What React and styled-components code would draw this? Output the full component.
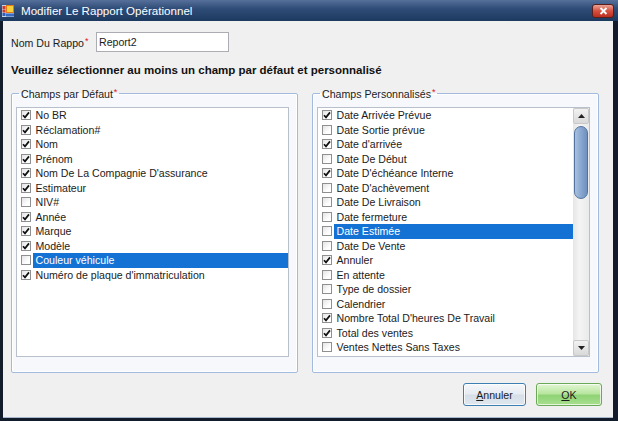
import styled, { createGlobalStyle } from "styled-components";

const GlobalStyle = createGlobalStyle`
  html, body {
    margin: 0;
    padding: 0;
    background: #fff;
  }
  body {
    font-family: "Liberation Sans", Arial, sans-serif;
  }
`;

const Window = styled.div`
  width: 618px;
  height: 421px;
  display: flex;
  flex-direction: column;
  background: #121c2a;
`;

const TitleBar = styled.div`
  height: 21px;
  flex: none;
  display: flex;
  align-items: center;
  padding-left: 2px;
  background: linear-gradient(to bottom, #56709a 0%, #2f4d78 40%, #1d3960 100%);
`;

const TitleText = styled.span`
  flex: 1;
  margin-left: 7px;
  color: #fff;
  font-size: 11.6px;
`;

const CloseButton = styled.div`
  width: 20px;
  height: 12px;
  margin-right: 4px;
  border: 1px solid #5a1f1a;
  border-radius: 3px;
  background: linear-gradient(to bottom, #eba497 0%, #d6503f 50%, #ba2d1f 100%);
  display: flex;
  align-items: center;
  justify-content: center;
`;

const Frame = styled.div`
  flex: 1;
  display: flex;
  padding: 0 5px 3px 3px;
`;

const Client = styled.div`
  flex: 1;
  background: #f0f0f0;
  border-bottom: 1px solid #a9b8cc;
  padding: 0 11px 0 8px;
  display: flex;
  flex-direction: column;
  font-size: 10.6px;
  color: #1b1b1b;
`;

const NameRow = styled.div`
  margin-top: 11px;
  height: 20px;
  display: flex;
  align-items: center;
`;

const Label = styled.span`
  width: 85px;
  white-space: nowrap;
`;

const Star = styled.span`
  color: #e0101a;
  font-size: 9px;
  vertical-align: 3px;
  margin-left: 1px;
`;

const TextInput = styled.div`
  width: 133px;
  height: 20px;
  box-sizing: border-box;
  border: 1px solid #abadb3;
  background: #fff;
  padding-left: 2px;
  display: flex;
  align-items: center;
`;

const Instruction = styled.div`
  margin-top: 11px;
  line-height: 14px;
  font-size: 11.5px;
  font-weight: bold;
  color: #111;
  white-space: nowrap;
`;

const Groups = styled.div`
  display: flex;
  gap: 14px;
  margin-top: 9px;
`;

const Group = styled.fieldset`
  width: 287px;
  box-sizing: border-box;
  margin: 0;
  padding: 0 0 15px 0;
  border: 1px solid #a3badf;
  border-radius: 2px;
  background: #f6f8fc;
  box-shadow: inset 0 0 0 1px #fff;
`;

const Legend = styled.legend`
  margin-left: 7px;
  padding: 0 2px;
  line-height: 13px;
  font-size: 10.6px;
  color: #1b1b1b;
`;

const ListBox = styled.div`
  width: 273px;
  height: 250px;
  box-sizing: border-box;
  margin: 6px 0 0 4px;
  border: 1px solid #b8c0cb;
  background: #fff;
  display: flex;
  overflow: hidden;
`;

const Items = styled.div`
  flex: 1;
  min-width: 0;
`;

const Row = styled.div`
  height: 14.5px;
  display: flex;
  align-items: center;
`;

const Box = styled.div`
  width: 10px;
  height: 10px;
  flex: none;
  box-sizing: border-box;
  margin-left: 3.5px;
  border: 1px solid #8e8f8f;
  background: linear-gradient(135deg, #e4e4e4 0%, #ffffff 70%);
  display: flex;
  align-items: center;
  justify-content: center;
`;

const ItemText = styled.div`
  flex: 1;
  height: 100%;
  margin-left: 2px;
  padding-left: 3px;
  display: flex;
  align-items: center;
  white-space: nowrap;
  background: ${(p) => (p.$selected ? "#1472d4" : "transparent")};
  color: ${(p) => (p.$selected ? "#fff" : "#1b1b1b")};
`;

const ScrollBar = styled.div`
  width: 16px;
  flex: none;
  display: flex;
  flex-direction: column;
  background: linear-gradient(to right, #e6e6e6, #f4f4f4 40%, #eaeaea);
`;

const ArrowButton = styled.div`
  height: 16px;
  flex: none;
  box-sizing: border-box;
  border: 1px solid #c9c9c9;
  border-radius: 2px;
  background: linear-gradient(to bottom, #f2f2f2, #d9d9d9);
  display: flex;
  align-items: center;
  justify-content: center;
`;

const Track = styled.div`
  flex: 1;
  padding: 2px 1px 0 1px;
`;

const Thumb = styled.div`
  height: 73px;
  box-sizing: border-box;
  border: 1px solid #52739f;
  border-radius: 7px;
  background: linear-gradient(to right, #a9c1df 0%, #8eabd2 40%, #6f90bf 100%);
`;

const Buttons = styled.div`
  margin-top: 10px;
  display: flex;
  justify-content: flex-end;
  gap: 10px;
`;

const Button = styled.div`
  width: ${(p) => p.$width}px;
  height: 23px;
  box-sizing: border-box;
  border-radius: 3px;
  display: flex;
  align-items: center;
  justify-content: center;
  font-size: 10.6px;
  color: #1b1b1b;
  border: 1px solid ${(p) => (p.$ok ? "#6aa957" : "#3c7fb1")};
  background: ${(p) =>
    p.$ok
      ? "linear-gradient(to bottom, #e2f6d4 0%, #b9e6a0 45%, #8fd376 55%, #a9df8f 100%)"
      : "linear-gradient(to bottom, #f6f8fa 0%, #e6ecf2 45%, #d6dfe8 55%, #dfe6ee 100%)"};
  box-shadow: inset 0 0 0 1px rgba(255, 255, 255, 0.7);
`;

const Mnemonic = styled.span`
  text-decoration: underline;
`;

const AppIcon = () => (
  <svg width="12" height="12" viewBox="0 0 12 12">
    <rect x="0" y="0" width="12" height="12" fill="#c9d4e4" />
    <rect x="0.5" y="1" width="3" height="3" fill="#d23a2a" />
    <rect x="0.5" y="4.5" width="3" height="3" fill="#d23a2a" />
    <rect x="0.5" y="8" width="3" height="3" fill="#2f5fb8" />
    <rect x="4.5" y="0.5" width="7" height="7" fill="#f6cf3a" stroke="#e07a1a" strokeWidth="1" />
    <rect x="4" y="8.5" width="8" height="3" fill="#3a6cc4" />
  </svg>
);

const CloseGlyph = () => (
  <svg width="9" height="8" viewBox="0 0 9 8">
    <path d="M1.5 1 L7.5 7 M7.5 1 L1.5 7" stroke="#fff" strokeWidth="1.8" />
  </svg>
);

const Arrow = ({ up }) => (
  <svg width="7" height="4" viewBox="0 0 7 4">
    <path d={up ? "M0 4 L3.5 0 L7 4 Z" : "M0 0 L3.5 4 L7 0 Z"} fill="#222" />
  </svg>
);

const CheckItem = ({ label, on, selected }) => (
  <Row>
    <Box>
      {on && (
        <svg width="8" height="8" viewBox="0 0 8 8">
          <path d="M1 4.2 L3 6.4 L7 1.4" fill="none" stroke="#111" strokeWidth="1.7" />
        </svg>
      )}
    </Box>
    <ItemText $selected={selected}>{label}</ItemText>
  </Row>
);

const defaults = [
  ["No BR", true],
  ["Réclamation#", true],
  ["Nom", true],
  ["Prénom", true],
  ["Nom De La Compagnie D'assurance", true],
  ["Estimateur", true],
  ["NIV#", false],
  ["Année", true],
  ["Marque", true],
  ["Modèle", true],
  ["Couleur véhicule", false, true],
  ["Numéro de plaque d'immatriculation", true],
];

const customs = [
  ["Date Arrivée Prévue", true],
  ["Date Sortie prévue", false],
  ["Date d'arrivée", true],
  ["Date De Début", false],
  ["Date D'échéance Interne", true],
  ["Date D'achèvement", false],
  ["Date De Livraison", false],
  ["Date fermeture", false],
  ["Date Estimée", false, true],
  ["Date De Vente", false],
  ["Annuler", true],
  ["En attente", false],
  ["Type de dossier", false],
  ["Calendrier", false],
  ["Nombre Total D'heures De Travail", true],
  ["Total des ventes", true],
  ["Ventes Nettes Sans Taxes", false],
];

export default function App() {
  return (
    <>
      <GlobalStyle />
      <Window>
        <TitleBar>
          <AppIcon />
          <TitleText>Modifier Le Rapport Opérationnel</TitleText>
          <CloseButton>
            <CloseGlyph />
          </CloseButton>
        </TitleBar>
        <Frame>
          <Client>
            <NameRow>
              <Label>
                Nom Du Rappo<Star>*</Star>
              </Label>
              <TextInput>Report2</TextInput>
            </NameRow>
            <Instruction>
              Veuillez sélectionner au moins un champ par défaut et personnalisé
            </Instruction>
            <Groups>
              <Group>
                <Legend>
                  Champs par Défaut<Star>*</Star>
                </Legend>
                <ListBox>
                  <Items>
                    {defaults.map(([label, on, sel]) => (
                      <CheckItem key={label} label={label} on={on} selected={sel} />
                    ))}
                  </Items>
                </ListBox>
              </Group>
              <Group>
                <Legend>
                  Champs Personnalisés<Star>*</Star>
                </Legend>
                <ListBox>
                  <Items>
                    {customs.map(([label, on, sel]) => (
                      <CheckItem key={label} label={label} on={on} selected={sel} />
                    ))}
                  </Items>
                  <ScrollBar>
                    <ArrowButton>
                      <Arrow up />
                    </ArrowButton>
                    <Track>
                      <Thumb />
                    </Track>
                    <ArrowButton>
                      <Arrow />
                    </ArrowButton>
                  </ScrollBar>
                </ListBox>
              </Group>
            </Groups>
            <Buttons>
              <Button $width={63}>
                <span>
                  <Mnemonic>A</Mnemonic>nnuler
                </span>
              </Button>
              <Button $width={66} $ok>
                <span>
                  <Mnemonic>O</Mnemonic>K
                </span>
              </Button>
            </Buttons>
          </Client>
        </Frame>
      </Window>
    </>
  );
}
